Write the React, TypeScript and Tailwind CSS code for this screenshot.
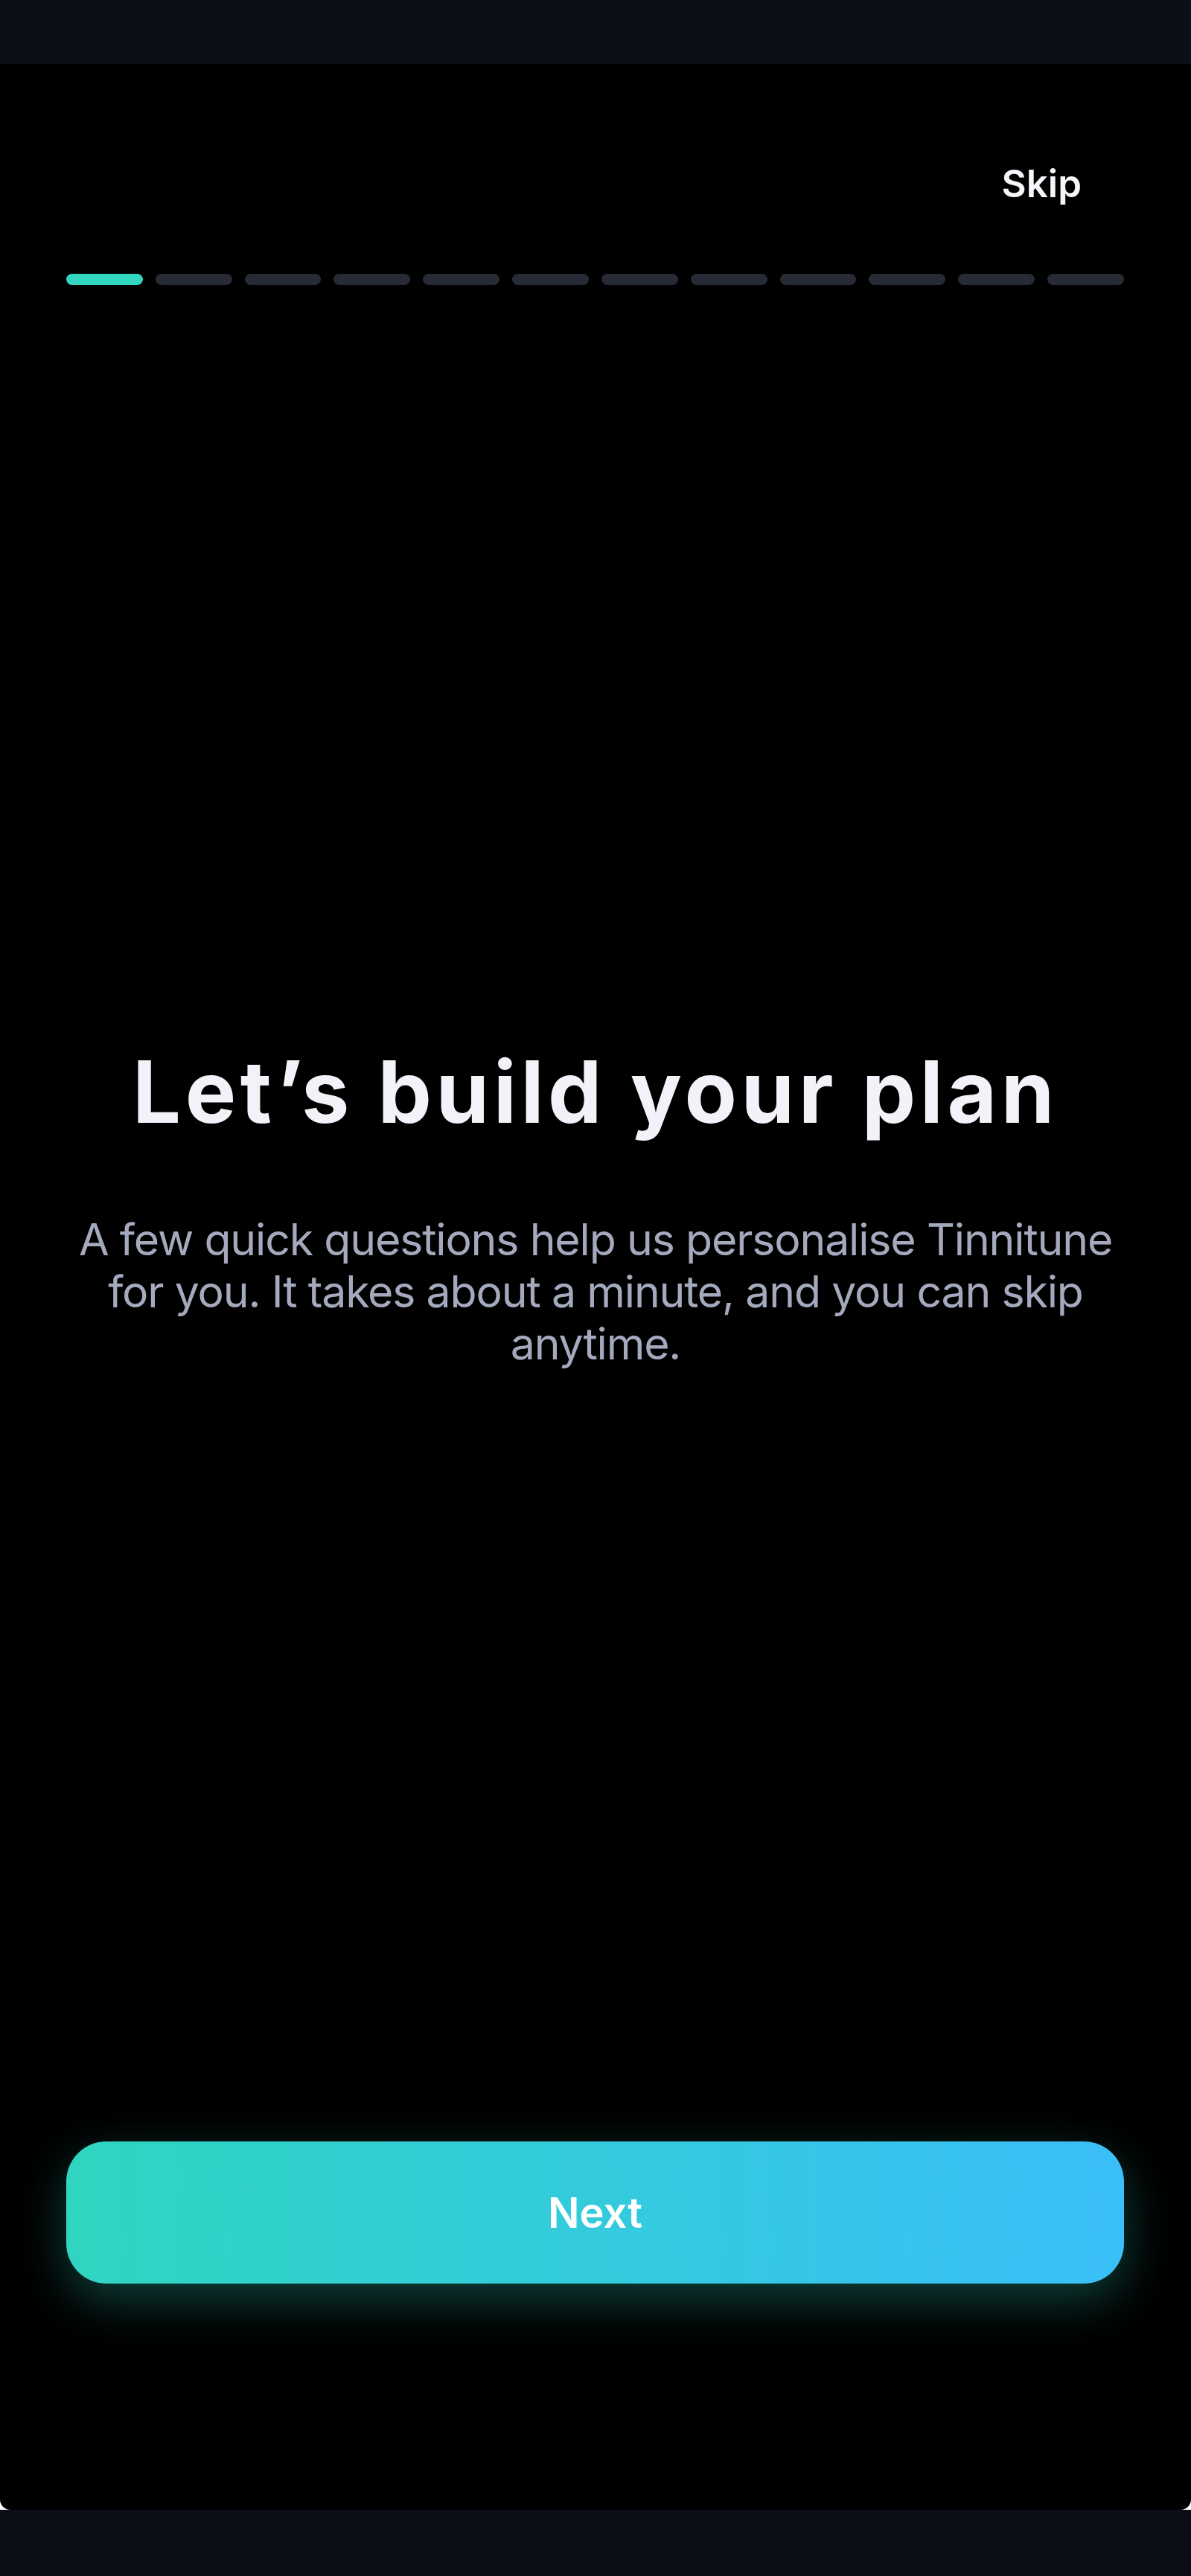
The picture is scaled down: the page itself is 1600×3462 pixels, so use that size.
import React from "react";

const STEPS = 12;
const CURRENT_STEP = 0;

function ProgressBar() {
  return (
    <div className="mt-[90px] flex gap-[17px] pl-[89px] pr-[90px]">
      {Array.from({ length: STEPS }).map((_, i) => (
        <div
          key={i}
          className={
            i === CURRENT_STEP
              ? "h-[15px] flex-1 rounded-full bg-[#33d6c1]"
              : "h-[15px] flex-1 rounded-full bg-[#262b35]"
          }
        />
      ))}
    </div>
  );
}

export default function App() {
  return (
    <div
      className="flex h-screen flex-col bg-white"
      style={{ fontFamily: "Inter, 'Noto Sans', sans-serif" }}
    >
      <div className="h-[86px] shrink-0 bg-[#0b0f17]" />

      <div className="flex flex-1 flex-col rounded-b-[14px] bg-black">
        <div className="flex justify-end pt-[130px] pr-[147px]">
          <button className="text-[51px] leading-[62px] font-semibold text-[#f5f6fa]">
            Skip
          </button>
        </div>

        <ProgressBar />

        <main className="flex flex-1 flex-col items-center justify-center px-[80px] pb-[22px] text-center">
          <h1 className="text-[115px] leading-[138px] font-bold tracking-[0.048em] text-[#f1f3f9]">
            Let’s build your plan
          </h1>
          <p className="mt-[94px] text-[59px] leading-[70px] tracking-[-0.02em] text-[#a4a9bd]">
            A few quick questions help us personalise Tinnitune for you. It
            takes about a minute, and you can skip anytime.
          </p>
        </main>

        <div className="px-[89px] pb-[304px] pr-[90px]">
          <button className="flex h-[191px] w-full items-center justify-center rounded-[54px] bg-linear-to-r from-[#30d5c0] to-[#3abff8] text-[56px] font-semibold text-white shadow-[0_22px_64px_rgba(45,212,191,0.3)]">
            Next
          </button>
        </div>
      </div>

      <div className="h-[89px] shrink-0 bg-[#0b0e17]" />
    </div>
  );
}
